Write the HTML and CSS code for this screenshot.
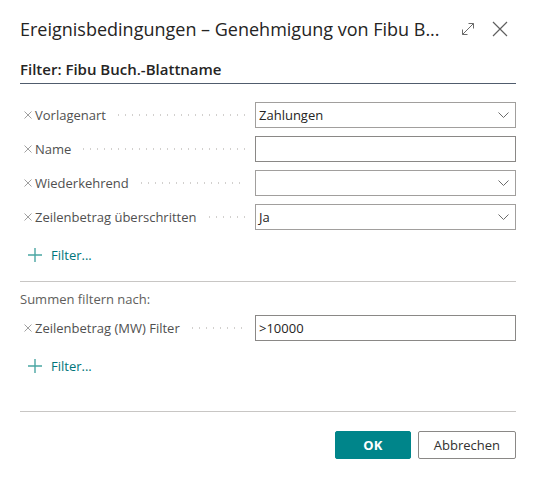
FILE: index.html
```html
<!DOCTYPE html>
<html lang="de">
<head>
  <meta charset="UTF-8">
  <title>Ereignisbedingungen</title>
  <link rel="stylesheet" href="styles.css">
</head>
<body>

<div class="dialog">
  <div class="title-bar">
    <h1 class="title">Ereignisbedingungen – Genehmigung von Fibu B...</h1>
    <div class="title-actions">
      <svg class="icon-btn" width="14" height="14" viewBox="0 0 14 14" fill="none" stroke="#6b6b6b" stroke-width="1">
        <path d="M1.5 12.5 L12.5 1.5 M7.5 1.5 H12.5 V6.5 M1.5 7.5 V12.5 H6.5"/>
      </svg>
      <svg class="icon-btn" width="16" height="16" viewBox="0 0 16 16" fill="none" stroke="#5f5f5f" stroke-width="1.2">
        <path d="M1 1 L15 15 M15 1 L1 15"/>
      </svg>
    </div>
  </div>

  <h2 class="section-head">Filter: Fibu Buch.-Blattname</h2>

  <div class="filter-list">
    <div class="filter-row">
      <div class="filter-label"><svg class="remove" width="8" height="8" viewBox="0 0 8 8"><path d="M0.5 0.5 L7.5 7.5 M7.5 0.5 L0.5 7.5"/></svg><span class="caption">Vorlagenart</span><span class="leader"></span></div>
      <div class="field select"><span>Zahlungen</span><svg class="chevron" width="11" height="6" viewBox="0 0 11 6"><path d="M0.5 0.5 L5.5 5.5 L10.5 0.5" fill="none" stroke="#6b6b6b"/></svg></div>
    </div>
    <div class="filter-row">
      <div class="filter-label"><svg class="remove" width="8" height="8" viewBox="0 0 8 8"><path d="M0.5 0.5 L7.5 7.5 M7.5 0.5 L0.5 7.5"/></svg><span class="caption">Name</span><span class="leader"></span></div>
      <div class="field"></div>
    </div>
    <div class="filter-row">
      <div class="filter-label"><svg class="remove" width="8" height="8" viewBox="0 0 8 8"><path d="M0.5 0.5 L7.5 7.5 M7.5 0.5 L0.5 7.5"/></svg><span class="caption">Wiederkehrend</span><span class="leader"></span></div>
      <div class="field select"><span></span><svg class="chevron" width="11" height="6" viewBox="0 0 11 6"><path d="M0.5 0.5 L5.5 5.5 L10.5 0.5" fill="none" stroke="#6b6b6b"/></svg></div>
    </div>
    <div class="filter-row">
      <div class="filter-label"><svg class="remove" width="8" height="8" viewBox="0 0 8 8"><path d="M0.5 0.5 L7.5 7.5 M7.5 0.5 L0.5 7.5"/></svg><span class="caption">Zeilenbetrag überschritten</span><span class="leader"></span></div>
      <div class="field select"><span>Ja</span><svg class="chevron" width="11" height="6" viewBox="0 0 11 6"><path d="M0.5 0.5 L5.5 5.5 L10.5 0.5" fill="none" stroke="#6b6b6b"/></svg></div>
    </div>
  </div>

  <a class="add-filter" href="#">
    <svg width="14" height="14" viewBox="0 0 14 14" stroke="#4aa6a3" stroke-width="1.4"><path d="M7 0 V14 M0 7 H14"/></svg>
    <span>Filter...</span>
  </a>

  <hr class="divider">

  <div class="sub-head">Summen filtern nach:</div>

  <div class="filter-list">
    <div class="filter-row">
      <div class="filter-label"><svg class="remove" width="8" height="8" viewBox="0 0 8 8"><path d="M0.5 0.5 L7.5 7.5 M7.5 0.5 L0.5 7.5"/></svg><span class="caption">Zeilenbetrag (MW) Filter</span><span class="leader"></span></div>
      <div class="field"><span>&gt;10000</span></div>
    </div>
  </div>

  <a class="add-filter" href="#">
    <svg width="14" height="14" viewBox="0 0 14 14" stroke="#4aa6a3" stroke-width="1.4"><path d="M7 0 V14 M0 7 H14"/></svg>
    <span>Filter...</span>
  </a>

  <hr class="divider footer-line">

  <div class="buttons">
    <button class="btn primary">OK</button>
    <button class="btn">Abbrechen</button>
  </div>
</div>

</body>
</html>
```

FILE: styles.css
```css
body {
  margin: 0;
  background: #fff;
  font-family: "Segoe UI", "Open Sans", sans-serif;
  color: #323130;
}
.dialog {
  padding: 14px 21px 0 20px;
}
.title-bar {
  display: flex;
  align-items: center;
  justify-content: space-between;
  height: 30px;
}
.title {
  margin: 0;
  font-size: 18px;
  font-weight: 400;
  color: #252423;
  white-space: nowrap;
}
.title-actions {
  display: flex;
  align-items: center;
  gap: 17px;
  padding-right: 8px;
}
.section-head {
  margin: 15px 0 0 0;
  padding-bottom: 4px;
  font-size: 15px;
  font-weight: 600;
  color: #252423;
  border-bottom: 1px solid #505c6d;
}
.filter-list {
  display: flex;
  flex-direction: column;
  gap: 8px;
  margin-top: 18px;
}
.filter-row {
  display: grid;
  grid-template-columns: 235px 1fr;
  align-items: center;
}
.filter-label {
  display: flex;
  align-items: center;
  padding-left: 4px;
  padding-right: 9px;
  font-size: 13px;
  color: #505050;
}
.remove {
  flex-shrink: 0;
  margin-right: 3px;
  fill: none;
  stroke: #a0a0a0;
  stroke-width: 1;
}
.leader {
  flex: 1;
  height: 2px;
  margin-left: 12px;
  background-image: linear-gradient(to right, #d2d0ce 1.5px, transparent 1.5px);
  background-size: 7px 2px;
  background-repeat: repeat-x;
}
.field {
  height: 24px;
  border: 1px solid #8a8886;
  display: flex;
  align-items: center;
  justify-content: space-between;
  padding: 0 6px 0 3px;
  font-size: 13px;
  color: #252423;
}
.field.select {
  border-color: #a19f9d;
}
.chevron {
  flex-shrink: 0;
}
.add-filter {
  display: flex;
  align-items: center;
  gap: 9px;
  margin: 16px 0 0 8px;
  font-size: 13px;
  color: #00757a;
  text-decoration: none;
}
.divider {
  margin: 17px 0 0 0;
  border: none;
  border-top: 1px solid #c8c6c4;
}
.sub-head {
  margin-top: 8px;
  font-size: 13px;
  color: #605e5c;
}
.sub-head + .filter-list {
  margin-top: 7px;
}
.footer-line {
  margin-top: 36px;
}
.buttons {
  display: flex;
  justify-content: flex-end;
  gap: 7px;
  margin-top: 19px;
}
.btn {
  height: 28px;
  min-width: 76px;
  padding: 0 15px;
  border: 1px solid #8a8886;
  border-radius: 2px;
  background: #fff;
  font-family: inherit;
  font-size: 13px;
  color: #323130;
}
.btn.primary {
  background: #00858a;
  border-color: #00858a;
  color: #fff;
  font-weight: 700;
}
```
